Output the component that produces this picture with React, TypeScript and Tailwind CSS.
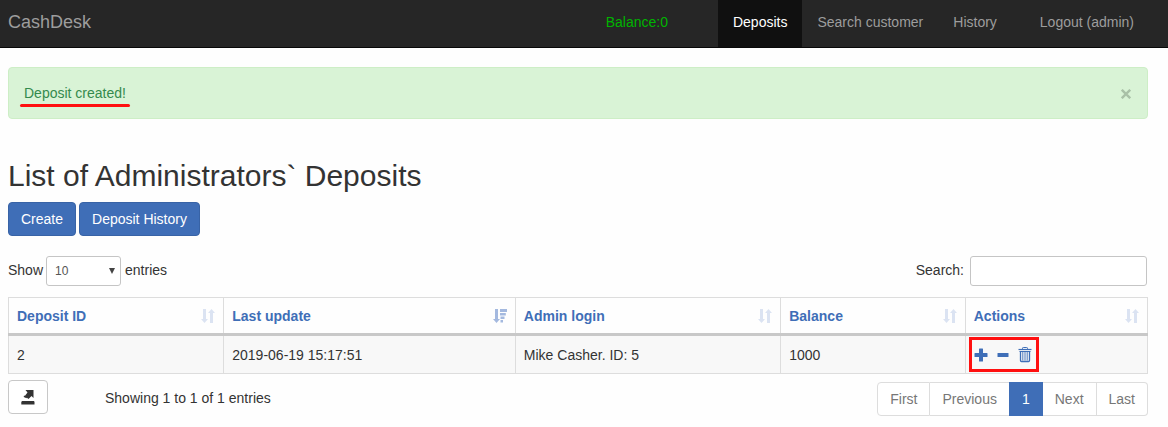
import React from "react";

const columns = [
  { label: "Deposit ID", width: "w-[18.9%]", sorted: false },
  { label: "Last update", width: "w-[25.6%]", sorted: true },
  { label: "Admin login", width: "w-[23.3%]", sorted: false },
  { label: "Balance", width: "w-[16.2%]", sorted: false },
  { label: "Actions", width: "w-[16%]", sorted: false },
];

const pages = ["First", "Previous", "1", "Next", "Last"];

function SortIcon() {
  return (
    <svg viewBox="0 0 14 14" className="h-[14px] w-[14px] shrink-0 fill-[#dbe3f2]" aria-hidden="true">
      <path d="M2 0h3v10h2l-3.500 4L0 10h2zM9 14V4H7l3.500-4L14 4h-2v10z" />
    </svg>
  );
}

function SortDescIcon() {
  return (
    <svg viewBox="0 0 14 14" className="h-[14px] w-[14px] shrink-0 fill-[#a4b9df]" aria-hidden="true">
      <path d="M2 0h3v10h2l-3.500 4L0 10h2zM7 0h7v3H7zM7 4h5.800v2.500H7zM7.500 7.500h4v2.500h-4zM7.500 11h2.500v2.500H7.500z" />
    </svg>
  );
}

function PlusIcon() {
  return (
    <svg viewBox="0 0 14 14" className="h-[14px] w-[14px] fill-current" aria-hidden="true">
      <path d="M5.500.5h3a.5.5 0 0 1 .5.5v4h4a.5.5 0 0 1 .5.5v3a.5.5 0 0 1-.5.5H9v4a.5.5 0 0 1-.5.5h-3A.5.5 0 0 1 5 13V9H1a.5.5 0 0 1-.5-.5v-3A.5.5 0 0 1 1 5h4V1a.5.5 0 0 1 .5-.5z" />
    </svg>
  );
}

function MinusIcon() {
  return (
    <svg viewBox="0 0 14 14" className="h-[14px] w-[14px] fill-current" aria-hidden="true">
      <rect x="1.500" y="5" width="11" height="4" rx=".5" />
    </svg>
  );
}

function TrashIcon() {
  return (
    <svg viewBox="0 0 14 16" className="h-4 w-[14px] fill-none stroke-current" aria-hidden="true">
      <path d="M.5 2.500h13" strokeWidth="1.200" />
      <path d="M4.500 2V1.300q0-.8.8-.8h3.400q.8 0 .8.8V2" />
      <path d="M1.500 4.500h11" strokeWidth="1" />
      <path d="M2.500 4.500v9q0 1 1 1h7q1 0 1-1v-9" strokeWidth="1.300" />
      <path d="M4.800 5v8.500M7 5v8.500M9.200 5v8.500" strokeWidth=".9" />
    </svg>
  );
}

function ExportIcon() {
  return (
    <svg viewBox="0 0 14 15" className="h-[15px] w-[14px] fill-[#333]" aria-hidden="true">
      <path d="M4.500 0H12.500v8L10.500 6 7.500 9 4 5.800l2.500-3.300zM3 5.500l1.300.5L6.500 8.300 5 8 2.700 7z" />
      <path d="M1 11h12l.5 1v2.500H.3V12z" />
    </svg>
  );
}

const navLink = "flex h-[47px] items-center px-[15px] pb-[3px]";

export default function App() {
  return (
    <div className="min-h-screen bg-[#fefefe] font-['Liberation_Sans',Arial,sans-serif] text-sm leading-5 text-[#333]">
      <header className="flex items-center justify-between border-b border-[#080808] bg-[#262626] pr-[19px] pl-2 text-[#9d9d9d]">
        <a href="#" className="pb-[3px] text-lg leading-5">CashDesk</a>
        <nav className="flex">
          <span className="flex items-center pr-[50px] pb-[3px] text-[#00b400]">Balance:0</span>
          <a href="#" aria-current="page" className={`${navLink} bg-[#101010] text-white`}>Deposits</a>
          <a href="#" className={navLink}>Search customer</a>
          <a href="#" className={navLink}>History</a>
          <a href="#" className={`${navLink} ml-[13px]`}>Logout (admin)</a>
        </nav>
      </header>

      <main className="pt-[19px] pr-5 pl-2">
        <div role="status" className="flex items-center justify-between rounded border border-[#cdeec6] bg-[#d9f3d6] px-[15px] py-[15px] text-[#348a4d]">
          <span className="relative">
            Deposit created!
            <span className="absolute -inset-x-1 top-[21px] h-[3px] rounded-full bg-[#ff1010]" />
          </span>
          <button type="button" aria-label="Close" className="px-px pt-[2px] text-[#a9c0a7]">
            <svg viewBox="0 0 10 10" className="h-[10px] w-[10px] fill-none stroke-current" strokeWidth="2.400" aria-hidden="true">
              <path d="M.8.8l8.400 8.400M9.200.8L.8 9.200" />
            </svg>
          </button>
        </div>

        <h1 className="mt-10 text-[30px] leading-[33px]">List of Administrators` Deposits</h1>
        <div className="mt-[10px] flex gap-[3px] text-white">
          <button type="button" className="h-[34px] rounded border border-[#3863a6] bg-[#3f6eb7] px-3">Create</button>
          <button type="button" className="h-[34px] rounded border border-[#3863a6] bg-[#3f6eb7] px-3">Deposit History</button>
        </div>

        <div className="mt-5 flex items-center justify-between">
          <label className="flex items-center gap-[3px]">
            <span className="pb-[2px]">Show</span>
            <span className="relative flex">
              <select defaultValue="10" className="h-[30px] w-[75px] appearance-none rounded-[3px] border border-[#c5c5c5] bg-white px-2 text-xs text-[#555]">
                <option>10</option>
                <option>25</option>
                <option>50</option>
                <option>100</option>
              </select>
              <svg viewBox="0 0 6 6" className="pointer-events-none absolute top-3 right-[6px] h-[6px] w-[6px] fill-[#444]" aria-hidden="true">
                <path d="M0 0h6L3 6z" />
              </svg>
            </span>
            <span className="pb-[2px] pl-px">entries</span>
          </label>
          <label className="mr-px flex items-center gap-[6px]">
            <span className="pb-[2px]">Search:</span>
            <input type="search" className="h-[30px] w-[177px] rounded-[3px] border border-[#c5c5c5] bg-white px-2 text-xs" />
          </label>
        </div>

        <table className="mt-[11px] w-full table-fixed border-collapse border border-[#ddd] text-left">
          <thead>
            <tr className="border-b-[3px] border-[#c8c8c8] text-[#3f6eb7]">
              {columns.map((c) => (
                <th key={c.label} className={`${c.width} h-[37px] border-x border-x-[#ddd] p-0 pr-2 pl-2`}>
                  <span className="flex items-center justify-between">
                    {c.label}
                    {c.sorted ? <SortDescIcon /> : <SortIcon />}
                  </span>
                </th>
              ))}
            </tr>
          </thead>
          <tbody>
            <tr className="bg-[#f8f8f8]">
              <td className="h-[39px] border border-t-0 border-[#ddd] px-2 py-0">2</td>
              <td className="border border-t-0 border-[#ddd] px-2 py-0">2019-06-19 15:17:51</td>
              <td className="border border-t-0 border-[#ddd] px-2 py-0">Mike Casher. ID: 5</td>
              <td className="border border-t-0 border-[#ddd] px-2 py-0">1000</td>
              <td className="border border-t-0 border-[#ddd] px-2 py-0">
                <div className="relative flex w-fit items-center gap-2 text-[#3f6eb7]">
                  <button type="button" aria-label="Add funds"><PlusIcon /></button>
                  <button type="button" aria-label="Withdraw funds"><MinusIcon /></button>
                  <button type="button" aria-label="Delete deposit"><TrashIcon /></button>
                  <span className="pointer-events-none absolute -top-[10px] -right-[7px] -bottom-[9px] -left-[5px] border-3 border-[#ff1010]" />
                </div>
              </td>
            </tr>
          </tbody>
        </table>

        <div className="mt-[6px] flex items-start justify-between">
          <div className="flex items-center">
            <button type="button" aria-label="Export" className="flex h-[34px] w-10 items-center justify-center rounded border border-[#c8c8c8] bg-white">
              <ExportIcon />
            </button>
            <p className="ml-[57px] pt-[2px]">Showing 1 to 1 of 1 entries</p>
          </div>
          <nav aria-label="Pagination" className="mt-[2px] flex text-[#777]">
            {pages.map((p) => (
              <a
                key={p}
                href="#"
                className={
                  p === "1"
                    ? "-ml-px border border-[#3f6eb7] bg-[#3f6eb7] px-3 py-[6px] text-white"
                    : "border-y border-r border-[#ddd] bg-white px-3 py-[6px] first:rounded-l first:border-l last:rounded-r"
                }
              >
                {p}
              </a>
            ))}
          </nav>
        </div>
      </main>
    </div>
  );
}
